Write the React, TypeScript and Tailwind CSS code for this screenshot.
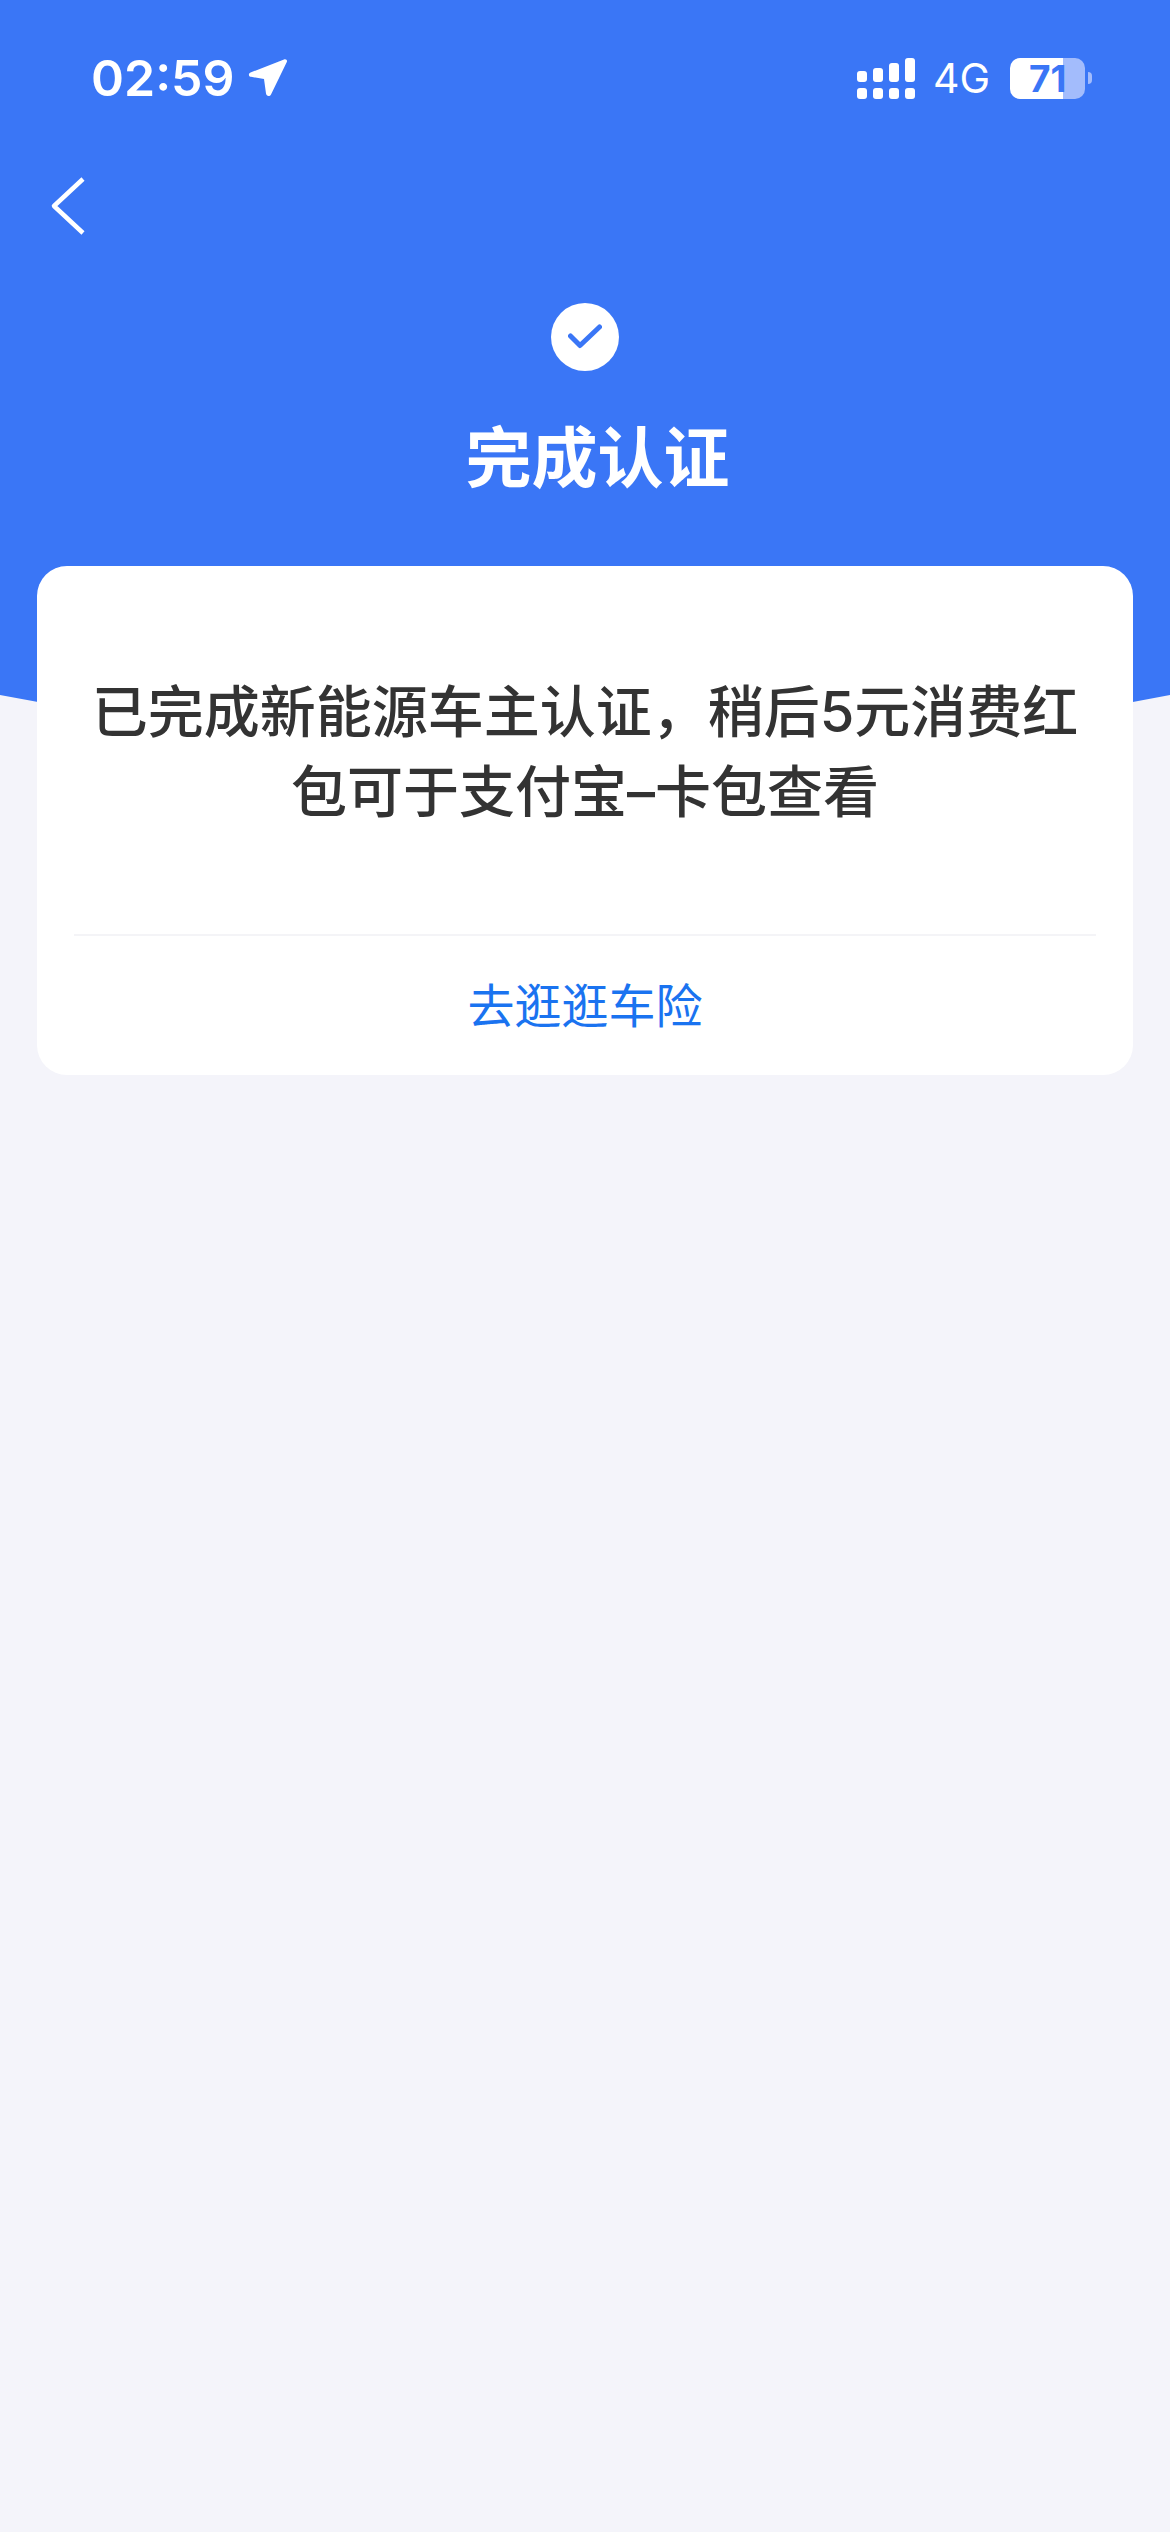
import React from 'react';

const SignalBars = () => {
  const heights = ['h-[11px]', 'h-[14px]', 'h-[19px]', 'h-[24px]'];
  return (
    <div className="flex flex-col gap-[6px] mr-[18px]">
      <div className="flex items-end gap-[6px]">
        {heights.map((h) => (
          <div key={h} className={`w-[10px] rounded-[3px] bg-white ${h}`} />
        ))}
      </div>
      <div className="flex gap-[6px]">
        {heights.map((h) => (
          <div key={h} className="h-[11px] w-[10px] rounded-[3px] bg-white" />
        ))}
      </div>
    </div>
  );
};

const Battery = () => (
  <div className="flex items-center">
    <div className="flex h-[41px] w-[75px] items-center rounded-[10px] bg-[linear-gradient(to_right,#ffffff_53px,#a3bcfc_53px)] pl-[19px] text-[37px] font-bold leading-none text-[#3a76f6]">
      71
    </div>
    <div className="ml-[3px] h-[12px] w-[4px] rounded-r-full bg-[#a3bcfc]" />
  </div>
);

const StatusBar = () => (
  <div className="flex items-center justify-between pl-[91px] pr-[78px] pt-[53px]">
    <div className="flex items-center">
      <span className="text-[50px] font-semibold leading-[50px] text-white">02:59</span>
      <svg width="40" height="40" viewBox="0 0 40 40" className="ml-[13px]">
        <path
          d="M36 1.5 L2.5 14.5 C0 15.6 0.6 18.6 3 18.8 L16 21 L18 35.5 C18.4 38.5 21.8 38.8 23 36.4 L38.8 4 C39.6 2.2 38 0.8 36 1.5 Z"
          fill="#fff"
        />
      </svg>
    </div>
    <div className="flex items-center text-white">
      <SignalBars />
      <span className="mr-[20px] text-[41px] leading-none">4G</span>
      <Battery />
    </div>
  </div>
);

export default function App() {
  return (
    <div className="flex min-h-[2532px] w-[1170px] flex-col bg-[#f4f4fa] font-['Inter','Noto_Sans_CJK_SC',sans-serif]">
      <div className="h-[695px] bg-[#3a76f6]">
        <StatusBar />
        <div className="pl-[50px] pt-[74px]">
          <svg width="36" height="58" viewBox="0 0 36 58" className="block" fill="none">
            <path d="M33 2 L4 29 L33 56" stroke="#fff" strokeWidth="4.5" strokeLinejoin="round" />
          </svg>
        </div>
        <div className="mt-[68px] flex justify-center">
          <div className="flex h-[68px] w-[68px] items-center justify-center rounded-full bg-white">
            <svg width="34" height="26" viewBox="0 0 34 26" fill="none">
              <path d="M2.5 12 L12 21.5 L31.5 3" stroke="#3a76f6" strokeWidth="5" strokeLinecap="round" strokeLinejoin="round" />
            </svg>
          </div>
        </div>
        <h1 className="mt-[42px] pl-[25px] text-center text-[66px] font-bold leading-[90px] text-white">完成认证</h1>
      </div>

      {/* arc under the blue header */}
      <svg width="1170" height="60" viewBox="0 0 1170 60" className="block">
        <path d="M0 0 H1170 V0 Q585 114 0 0 Z" fill="#3a76f6" />
      </svg>

      <div className="mx-[37px] -mt-[189px] relative flex h-[509px] flex-col rounded-[30px] bg-white">
        <p className="px-[50px] pt-[106px] text-center text-[56px] font-medium leading-[80px] text-[#333333]">
          已完成新能源车主认证，稍后5元消费红包可于支付宝–卡包查看
        </p>
        <div className="mx-[37px] mt-[102px] h-[2px] bg-[#f4f4f7]" />
        <div className="flex flex-1 items-center justify-center text-[47px] leading-none text-[#1a73f0]">
          去逛逛车险
        </div>
      </div>
    </div>
  );
}
